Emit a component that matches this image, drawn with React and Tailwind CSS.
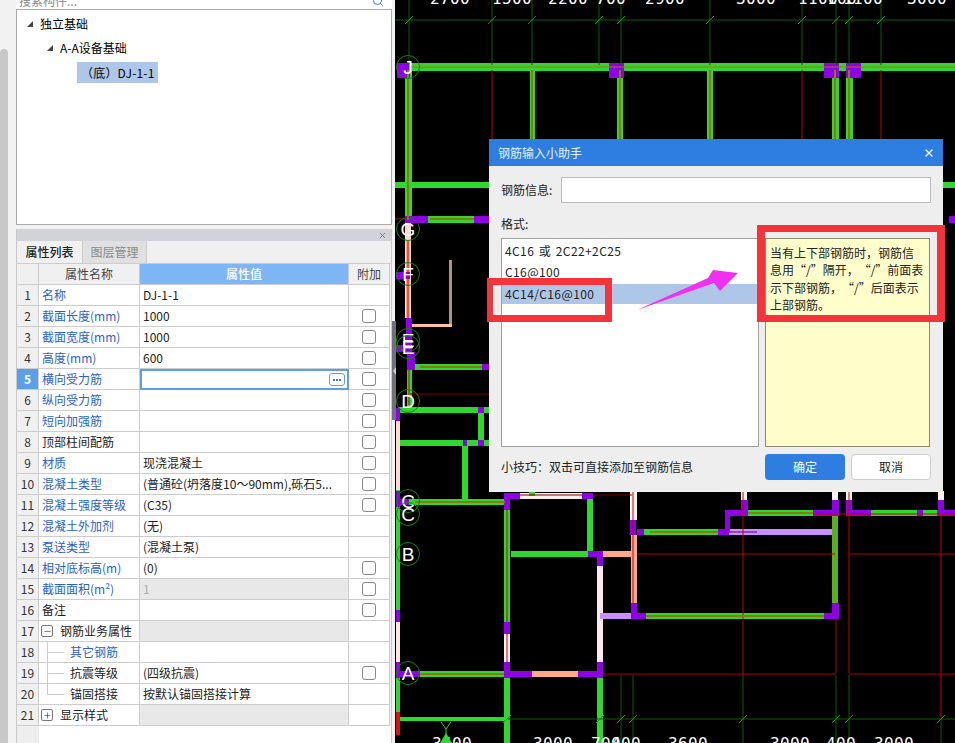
import React from "react";
import { Search, X, Plus, Minus } from "lucide-react";

const GREEN = "#2fd82f";
const PURPLE = "#8f00e6";
const PEACH = "#ffa98a";
const LAV = "#c890ff";
const DIM = "#0c5a0c";
const RED = "#c00000";
const OLIVE = "#8a7a10";

const rows = [
  { name: "名称", blue: true, value: "DJ-1-1" },
  { name: "截面长度(mm)", blue: true, value: "1000", check: true },
  { name: "截面宽度(mm)", blue: true, value: "1000", check: true },
  { name: "高度(mm)", blue: true, value: "600", check: true },
  { name: "横向受力筋", blue: true, value: "", check: true, active: true },
  { name: "纵向受力筋", blue: true, value: "", check: true },
  { name: "短向加强筋", blue: true, value: "", check: true },
  { name: "顶部柱间配筋", value: "", check: true },
  { name: "材质", blue: true, value: "现浇混凝土", check: true },
  { name: "混凝土类型", blue: true, value: "(普通砼(坍落度10～90mm),砾石5...", check: true },
  { name: "混凝土强度等级", blue: true, value: "(C35)", check: true },
  { name: "混凝土外加剂", blue: true, value: "(无)" },
  { name: "泵送类型", blue: true, value: "(混凝土泵)" },
  { name: "相对底标高(m)", blue: true, value: "(0)", check: true },
  { name: "截面面积(m²)", blue: true, value: "1", check: true, disabled: true },
  { name: "备注", value: "", check: true },
  { name: "钢筋业务属性", group: "minus", value: "" },
  { name: "其它钢筋", blue: true, child: true, value: "" },
  { name: "抗震等级", child: true, value: "(四级抗震)", check: true },
  { name: "锚固搭接", child: true, last: true, value: "按默认锚固搭接计算" },
  { name: "显示样式", group: "plus", value: "" },
];

// x, y, w, h, fill
const blocks = [
  // top beam and columns
  [407, 63, 548, 8, GREEN],
  [405, 70, 7, 150, GREEN],
  [530, 70, 5, 70, GREEN],
  [617, 70, 6, 70, GREEN],
  [707, 70, 6, 70, GREEN],
  [832, 70, 7, 70, GREEN],
  [846, 70, 7, 70, GREEN],
  [397, 63, 13, 15, PURPLE],
  [609, 63, 15, 15, PURPLE],
  [824, 63, 15, 15, PURPLE],
  [846, 63, 15, 15, PURPLE],
  [395, 182, 95, 6, GREEN],
  [943, 182, 12, 6, GREEN],
  [405, 216, 85, 7, GREEN],
  [405, 216, 23, 7, PURPLE],
  [474, 216, 16, 7, PURPLE],
  [949, 216, 6, 7, PURPLE],
  // left side G to D
  [405, 223, 6, 95, "#ffd8d0"],
  [406, 240, 4, 78, PEACH],
  [406, 318, 6, 34, PURPLE],
  [396, 272, 14, 7, PURPLE],
  [396, 345, 14, 7, PURPLE],
  [407, 352, 8, 18, PURPLE],
  [449, 260, 3, 66, "#b09088"],
  [412, 324, 40, 3, "#ffc0a0"],
  [415, 364, 67, 6, GREEN],
  [482, 364, 8, 6, PURPLE],
  [407, 370, 5, 38, GREEN],
  [398, 407, 92, 6, GREEN],
  [397, 440, 93, 6, GREEN],
  [478, 407, 6, 6, PURPLE],
  [478, 440, 6, 6, PURPLE],
  [463, 440, 4, 6, PURPLE],
  [478, 413, 6, 27, GREEN],
  [462, 446, 6, 56, GREEN],
  [396, 408, 4, 13, PURPLE],
  [396, 421, 4, 70, "#ffd8d0"],
  [396, 490, 4, 120, GREEN],
  [396, 491, 4, 16, PURPLE],
  [396, 610, 4, 12, PURPLE],
  [396, 622, 4, 40, "#ffe4e4"],
  [396, 662, 4, 16, PURPLE],
  [396, 678, 4, 34, GREEN],
  // lower rooms
  [409, 499, 96, 6, GREEN],
  [397, 499, 12, 6, PURPLE],
  [504, 493, 6, 185, GREEN],
  [504, 493, 16, 6, PURPLE],
  [520, 493, 62, 6, "#fff0ee"],
  [529, 492, 6, 4, GREEN],
  [582, 493, 11, 6, PURPLE],
  [587, 499, 6, 53, GREEN],
  [504, 493, 6, 17, PURPLE],
  [504, 622, 6, 12, PURPLE],
  [504, 634, 6, 28, "#fff0ee"],
  [504, 662, 6, 16, PURPLE],
  [511, 551, 77, 6, GREEN],
  [588, 551, 15, 6, PURPLE],
  [603, 551, 28, 6, PEACH],
  [631, 551, 6, 6, PURPLE],
  [597, 554, 6, 12, PURPLE],
  [597, 566, 6, 96, "#ffe8f0"],
  [597, 662, 6, 16, PURPLE],
  [630, 491, 7, 29, "#fff4f0"],
  [630, 520, 6, 15, PURPLE],
  [631, 535, 6, 68, PEACH],
  [631, 603, 6, 12, PURPLE],
  [637, 529, 7, 6, PURPLE],
  [644, 529, 74, 6, GREEN],
  [718, 529, 11, 6, PURPLE],
  [729, 529, 103, 6, LAV],
  [725, 510, 5, 22, PURPLE],
  [725, 510, 23, 6, PURPLE],
  [741, 491, 6, 9, "#fff0ee"],
  [741, 500, 7, 16, PURPLE],
  [748, 510, 65, 6, GREEN],
  [813, 510, 26, 6, PURPLE],
  [832, 491, 6, 9, "#fff0ee"],
  [832, 500, 7, 16, PURPLE],
  [832, 516, 6, 87, "#5ab01e"],
  [832, 603, 7, 15, PURPLE],
  [846, 491, 6, 9, "#fff0ee"],
  [846, 500, 6, 16, PURPLE],
  [852, 510, 19, 6, PURPLE],
  [871, 510, 46, 6, GREEN],
  [917, 510, 6, 6, PURPLE],
  [923, 510, 14, 6, GREEN],
  [937, 510, 18, 6, PURPLE],
  [938, 491, 6, 9, "#fff0ee"],
  [938, 500, 6, 12, PURPLE],
  [600, 613, 31, 6, LAV],
  [631, 613, 15, 6, PURPLE],
  [646, 613, 178, 6, GREEN],
  [824, 613, 15, 6, PURPLE],
  [420, 671, 84, 6, GREEN],
  [398, 671, 22, 6, PURPLE],
  [504, 671, 28, 6, PURPLE],
  [532, 671, 46, 6, PEACH],
  [578, 671, 24, 6, PURPLE],
  [504, 678, 6, 65, GREEN],
  [597, 678, 6, 65, GREEN],
  [399, 717, 105, 4, GREEN],
  [396, 712, 4, 23, "#e01010"],
];

// x1, y1, x2, y2, colour
const wires = [
  [395, 20, 955, 20, DIM],
  [409, 0, 409, 65, DIM],
  [492, 0, 492, 65, DIM],
  [532, 0, 532, 65, DIM],
  [599, 0, 599, 65, DIM],
  [621, 0, 621, 65, DIM],
  [710, 0, 710, 65, DIM],
  [802, 0, 802, 65, DIM],
  [836, 0, 836, 65, DIM],
  [849, 0, 849, 65, DIM],
  [881, 0, 881, 65, DIM],
  [492, 70, 492, 140, RED],
  [802, 70, 802, 140, RED],
  [881, 70, 881, 140, RED],
  [395, 219, 405, 219, RED],
  [430, 219, 474, 219, OLIVE],
  [410, 67, 955, 67, "#a8701a"],
  [408, 70, 408, 220, OLIVE],
  [532, 70, 532, 140, OLIVE],
  [620, 70, 620, 140, OLIVE],
  [710, 70, 710, 140, OLIVE],
  [835, 70, 835, 140, OLIVE],
  [849, 70, 849, 140, OLIVE],
  [408, 240, 408, 318, RED],
  [420, 367, 482, 367, OLIVE],
  [409, 370, 409, 405, RED],
  [410, 394, 490, 394, "#800000"],
  [415, 502, 505, 502, OLIVE],
  [507, 510, 507, 622, RED],
  [507, 634, 507, 662, RED],
  [593, 495, 632, 495, "#800000"],
  [520, 495, 582, 495, "#800000"],
  [633, 491, 633, 603, RED],
  [637, 554, 835, 554, "#b00000"],
  [849, 554, 955, 554, "#b00000"],
  [650, 532, 718, 532, OLIVE],
  [729, 532, 757, 532, "#600060"],
  [743, 491, 743, 675, RED],
  [748, 513, 813, 513, OLIVE],
  [813, 514, 955, 514, RED],
  [836, 618, 836, 673, "#b00000"],
  [849, 491, 849, 673, RED],
  [941, 516, 941, 720, RED],
  [646, 616, 824, 616, OLIVE],
  [420, 674, 504, 674, OLIVE],
  [603, 674, 836, 674, "#b00000"],
  [849, 674, 955, 674, "#b00000"],
  [508, 719, 955, 719, DIM],
  [621, 675, 621, 743, DIM],
  [633, 675, 633, 743, DIM],
  [743, 675, 743, 743, DIM],
  [836, 675, 836, 743, DIM],
  [849, 675, 849, 743, DIM],
  [941, 720, 941, 743, DIM],
];

const ticksTop = [409, 492, 532, 599, 621, 710, 802, 836, 849, 881];
const ticksBottom = [507, 600, 621, 633, 743, 836, 849, 941];
const axes = [
  ["J", 67], ["G", 229], ["F", 274], ["E", 340], ["E", 347], ["D", 401],
  ["C", 501], ["C", 514], ["B", 554], ["A", 673],
];
const topDims = [
  ["2700", 450], ["1500", 512], ["2200", 568], ["700", 611], ["2900", 665],
  ["3000", 756], ["1100", 818], ["100", 842], ["1100", 863], ["3000", 927],
];
const bottomDims = [
  ["3600", 452], ["3000", 553], ["700", 606], ["400", 626], ["3600", 688],
  ["3000", 790], ["400", 841], ["3000", 894],
];

function CadDrawing() {
  return (
    <svg viewBox="395 0 560 743" className="absolute inset-0 w-full h-full">
      {blocks.map((b, i) => (
        <rect key={i} x={b[0]} y={b[1]} width={b[2]} height={b[3]} fill={b[4]} />
      ))}
      {wires.map((w, i) => (
        <line key={i} x1={w[0]} y1={w[1]} x2={w[2]} y2={w[3]} stroke={w[4]} strokeWidth={w[4] === OLIVE ? 2 : 1} />
      ))}
      {ticksTop.map((x) => (
        <line key={x} x1={x - 4} y1={24} x2={x + 4} y2={16} stroke="#12a012" />
      ))}
      {ticksBottom.map((x) => (
        <line key={x} x1={x - 4} y1={723} x2={x + 4} y2={715} stroke="#12a012" />
      ))}
      {axes.map(([l, y], i) => (
        <g key={i}>
          <circle cx="408" cy={y} r="11.5" fill="none" stroke="#0c8a0c" />
          <text x="408" y={y + 7} textAnchor="middle" fill="#fff" fontSize="19" fontFamily="Liberation Sans, sans-serif">
            {l}
          </text>
        </g>
      ))}
      {topDims.map(([t, x], i) => (
        <text key={i} x={x} y="4" textAnchor="middle" fill="#fff" fontSize="16" letterSpacing="0.4" fontFamily="DejaVu Sans Mono, monospace">
          {t}
        </text>
      ))}
      {bottomDims.map(([t, x], i) => (
        <text key={i} x={x} y="749" textAnchor="middle" fill="#fff" fontSize="16" letterSpacing="0.4" fontFamily="DejaVu Sans Mono, monospace">
          {t}
        </text>
      ))}
      <path d="M441 722 L446 729 L451 722 M446 729 V736" stroke="#2fd82f" fill="none" />
      <path d="M446 733 L440 743 H452 Z" fill="#2fd82f" />
    </svg>
  );
}

function Tri() {
  return <span className="w-0 h-0 border-l-[6px] border-l-transparent border-b-[6px] border-b-[#444]" />;
}

function TreePanel() {
  return (
    <div className="h-[216px] border border-[#aaa] bg-white pt-[2px] overflow-hidden">
      <div className="h-6 flex items-center pl-[10px] gap-[7px]">
        <Tri />
        <span>独立基础</span>
      </div>
      <div className="h-6 flex items-center pl-[30px] gap-[7px]">
        <Tri />
        <span>A-A设备基础</span>
      </div>
      <div className="ml-[60px] mt-[2px] w-[81px] h-[21px] bg-[#aec7e8] flex items-center pl-1 tracking-[0.2px]">（底）DJ-1-1</div>
    </div>
  );
}

function NameCell({ row }) {
  const color = row.blue ? "text-[#2a5fcf]" : "text-[#222]";
  if (row.group) {
    const Icon = row.group === "minus" ? Minus : Plus;
    return (
      <div className="h-full flex items-center pl-[2px] gap-[7px] text-[#222]">
        <span className="w-[12px] h-[12px] border border-[#777] rounded-[2px] flex items-center justify-center">
          <Icon size={9} strokeWidth={1.5} />
        </span>
        <span>{row.name}</span>
      </div>
    );
  }
  if (row.child) {
    return (
      <div className={`relative h-full flex items-center pl-[31px] ${color}`}>
        <span className={`absolute left-[8px] top-0 w-px bg-[#ccc] ${row.last ? "h-[10px]" : "h-full"}`} />
        <span className="absolute left-[8px] top-[10px] w-[17px] h-px bg-[#ccc]" />
        {row.name}
      </div>
    );
  }
  return <div className={`h-full flex items-center pl-[3px] ${color}`}>{row.name}</div>;
}

function PropertyPanel() {
  return (
    <div className="mt-1 flex-1 border-x border-[#c8c8c8] bg-[#f0f0f0] flex flex-col overflow-hidden">
      <div className="h-3 bg-[#d2d3d9] flex items-center justify-end pr-[4px] shrink-0">
        <X size={9} className="text-[#666]" />
      </div>
      <div className="h-[22px] flex shrink-0">
        <div className="w-[65px] flex items-center justify-center font-medium text-[#222]">属性列表</div>
        <div className="w-[65px] flex items-center justify-center bg-[#e0e0e0] border-x border-[#ccc] text-[#8a8a8a]">图层管理</div>
      </div>
      <div className="grid grid-cols-[22px_101px_209px_41px] auto-rows-[21px] border-t border-[#ccc]">
        <div className="bg-[#f0f0f0] border-r border-b border-[#ccc]" />
        <div className="bg-[#f0f0f0] border-r border-b border-[#ccc] flex items-center justify-center text-[#444]">属性名称</div>
        <div className="bg-[#7eb6f5] border-r border-b border-[#ccc] flex items-center justify-center text-white font-medium">属性值</div>
        <div className="bg-[#f0f0f0] border-r border-b border-[#ccc] flex items-center justify-center text-[#444]">附加</div>
        {rows.map((row, i) => (
          <React.Fragment key={i}>
            <div className={`border-r border-b border-[#ccc] flex items-center justify-center ${row.active ? "bg-[#5a9fe8] text-white font-bold" : "bg-[#f0f0f0] text-[#333]"}`}>
              {i + 1}
            </div>
            <div className="bg-white border-r border-b border-[#ccc]">
              <NameCell row={row} />
            </div>
            {row.active ? (
              <div className="bg-white border-2 border-[#5a9fe0] flex items-center justify-end pr-[2px]">
                <span className="w-[16px] h-[13px] border border-[#5a9fe0] rounded-[3px] flex items-center justify-center gap-[1px]">
                  <span className="w-[2px] h-[2px] bg-[#3a7fc8]" />
                  <span className="w-[2px] h-[2px] bg-[#3a7fc8]" />
                  <span className="w-[2px] h-[2px] bg-[#3a7fc8]" />
                </span>
              </div>
            ) : (
              <div className={`border-r border-b border-[#ccc] flex items-center pl-[3px] whitespace-nowrap overflow-hidden ${row.group || row.disabled ? "bg-[#e8e8e8]" : "bg-white"} ${row.disabled ? "text-[#aaa]" : "text-[#222]"}`}>
                {row.value}
              </div>
            )}
            <div className="bg-white border-r border-b border-[#ccc] flex items-center justify-center">
              {row.check && <span className="w-[14px] h-[14px] border border-[#888] rounded-[3px] bg-white" />}
            </div>
          </React.Fragment>
        ))}
      </div>
      <div className="flex-1 flex">
        <div className="w-[22px] bg-[#eeeeee]" />
        <div className="flex-1 bg-white" />
      </div>
    </div>
  );
}

function RebarDialog() {
  return (
    <div className="absolute left-[94px] top-[139px] w-[454px] h-[353px] bg-[#eeeeee] flex flex-col">
      <div className="h-[27px] bg-[#2e7de0] text-[#e8f0fb] flex items-center justify-between pl-[9px] pr-[8px] shrink-0">
        <span>钢筋输入小助手</span>
        <X size={12} strokeWidth={2.5} className="text-white" />
      </div>
      <div className="flex-1 px-3 pt-[11px]">
        <div className="flex items-center h-[26px]">
          <span className="w-[60px] text-[#222]">钢筋信息:</span>
          <div className="w-[370px] h-[26px] bg-white border border-[#bbb]" />
        </div>
        <div className="h-[21px] mt-[10px] leading-[21px] text-[#222]">格式:</div>
        <div className="mt-[4px] flex gap-[6px] h-[209px]">
          <div className="w-[258px] bg-white border border-[#a0a0a0] pt-[1px] text-[#222] tracking-[0.4px]">
            <div className="h-[21px] pl-[3px] flex items-center [word-spacing:1.5px]">4C16 或 2C22+2C25</div>
            <div className="h-[21px] pl-[3px] flex items-center">C16@100</div>
            <div className="h-[20px] mt-[2px] pl-[3px] flex items-center bg-[#aec7e8]">4C14/C16@100</div>
          </div>
          <div className="w-[165px] bg-[#ffffcc] border border-[#8a8a70] px-1 pt-[5px] leading-[17.3px] text-[#222] whitespace-nowrap [word-spacing:-2.7px]">
            <div>当有上下部钢筋时，钢筋信</div>
            <div>息用 “/” 隔开， “/” 前面表</div>
            <div>示下部钢筋， “/” 后面表示</div>
            <div>上部钢筋。</div>
          </div>
        </div>
        <div className="mt-[7px] flex items-center justify-between h-[26px]">
          <span className="text-[#222]">小技巧：双击可直接添加至钢筋信息</span>
          <div className="flex gap-[6px]">
            <button className="w-[80px] h-[26px] rounded-[4px] bg-[#2e7de0] text-white">确定</button>
            <button className="w-[80px] h-[26px] rounded-[4px] bg-white border border-[#ccc] text-[#222]">取消</button>
          </div>
        </div>
      </div>
    </div>
  );
}

function Annotations() {
  return (
    <>
      <div className="absolute left-[92px] top-[278px] w-[125px] h-[44px] border-y-[7px] border-l-[6px] border-r-[7px] border-[#f5333a]" />
      <div className="absolute left-[362px] top-[225px] w-[188px] h-[97px] border-[7px] border-l-[8px] border-r-[8px] border-[#f5333a]" />
      <svg viewBox="0 0 110 50" className="absolute left-[240px] top-[265px] w-[110px] h-[50px]">
        <path d="M2 45 L73 13 L78 5 L103 8 L85 26 L79 18 Z" fill="#f030f0" />
      </svg>
    </>
  );
}

export default function App() {
  return (
    <div className="w-[955px] h-[743px] overflow-hidden flex bg-black text-[12px] font-['Noto_Sans_CJK_SC','Noto_Sans',sans-serif]">
      <div className="w-[395px] h-full bg-[#f2f2f2] flex shrink-0">
        <div className="w-[8px] h-full pt-[49px]">
          <div className="w-full h-full bg-[#c8c8c8] rounded-t-[4px]" />
        </div>
        <div className="ml-[8px] w-[376px] h-full flex flex-col">
          <div className="h-[21px] -mt-[12px] pt-[4px] bg-white flex items-center justify-between px-[3px] text-[#888] shrink-0">
            <span>搜索构件...</span>
            <Search size={12} className="text-[#3a7fc8] mr-[5px]" />
          </div>
          <TreePanel />
          <PropertyPanel />
        </div>
      </div>
      <div className="relative flex-1 bg-black">
        <CadDrawing />
        <div className="absolute -left-[3px] top-[321px] w-[4px] h-[99px] bg-[#707078] flex items-center justify-center">
          <span className="w-0 h-0 border-y-[4px] border-y-transparent border-r-[3px] border-r-[#ccc]" />
        </div>
        <RebarDialog />
        <Annotations />
      </div>
    </div>
  );
}
